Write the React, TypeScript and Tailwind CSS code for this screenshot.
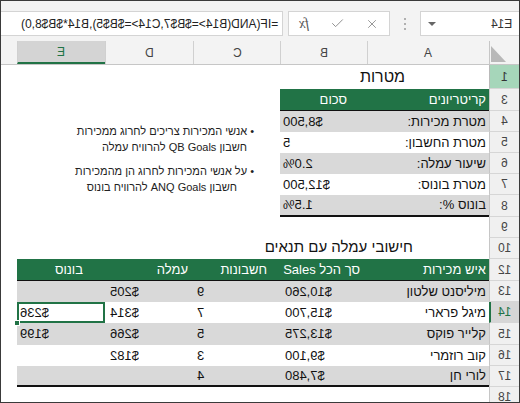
import React from 'react';
import { X, Check } from 'lucide-react';

type Kids = { children?: React.ReactNode; className?: string };

// the sheet is shown mirrored (RTL Excel), so latin digits/letters are flipped
const Mir = ({ children, className = '' }: Kids) => (
  <span dir="ltr" className={`inline-block [transform:scaleX(-1)] ${className}`}>{children}</span>
);

const Heb = ({ children, className = '' }: Kids) => (
  <span dir="rtl" className={className}>{children}</span>
);

const Cell = ({ w, className = '', children }: Kids & { w: string }) => (
  <div className={`${w} shrink-0 h-full flex items-center whitespace-nowrap ${className}`}>{children}</div>
);

const RowHead = ({ n, kind }: { n: number; kind?: 'sel' | 'hl' }) => (
  <div
    className={`w-[30px] shrink-0 h-full flex items-center justify-center text-[12px] border-b border-b-[#d6d6d6] ${
      kind === 'sel'
        ? 'bg-[#d6d6d6] text-[#217346] border-l-2 border-l-[#217346]'
        : kind === 'hl'
        ? 'bg-[#a6d6ba] text-[#333] border-l border-l-[#b9b9b9]'
        : 'bg-[#f0f0f0] text-[#444] border-l border-l-[#c6c6c6]'
    }`}
  >
    <Mir>{n}</Mir>
  </div>
);

const ColHead = ({ w, label, sel }: { w: string; label: string; sel?: boolean }) => (
  <div
    className={`${w} shrink-0 h-full flex items-center justify-center text-[12px] border-l border-[#d0d0d0] ${
      sel ? 'bg-[#d4d4d4] text-[#217346] border-b-2 border-b-[#217346]' : 'text-[#444]'
    }`}
  >
    <Mir>{label}</Mir>
  </div>
);

const Blank = () => (
  <>
    <Cell w="w-[16px]" />
    <Cell w="w-[88px]" />
    <Cell w="w-[88px]" />
    <Cell w="w-[87px]" />
  </>
);

const goals = [
  { label: 'מטרת מכירות:', value: '$8,500', h: 'h-[21px]' },
  { label: 'מטרת החשבון:', value: '5', h: 'h-[21px]' },
  { label: 'שיעור עמלה:', value: '2.0%', h: 'h-[21px]' },
  { label: 'מטרת בונוס:', value: '$12,500', h: 'h-[21px]' },
  { label: 'בונוס %:', value: '1.5%', h: 'h-[22px]' },
];

const reps = [
  { name: 'מיליסנט שלטון', sales: '$10,260', acc: '9', comm: '$205', bonus: '', h: 'h-[21px]' },
  { name: 'מיגל פרארי', sales: '$15,700', acc: '7', comm: '$314', bonus: '$236', h: 'h-[21px]' },
  { name: 'קלייר פוקס', sales: '$13,275', acc: '5', comm: '$266', bonus: '$199', h: 'h-[22px]' },
  { name: 'קוב רוזמרי', sales: '$9,100', acc: '3', comm: '$182', bonus: '', h: 'h-[21px]' },
  { name: 'לורי חן', sales: '$7,480', acc: '4', comm: '', bonus: '', h: 'h-[21px]' },
];

export default function App() {
  return (
    <div className="w-[520px] h-[403px] overflow-hidden relative border border-[#3a3a3a] bg-white text-[13px] text-[#111] font-['Liberation_Sans','DejaVu_Sans',sans-serif]">
      {/* formula bar */}
      <div className="h-[40px] bg-[#f3f3f3] flex items-start pt-[10px]">
        <div className="w-[282px] h-[25px] bg-white border border-l-0 border-[#d4d4d4] flex items-center justify-end pr-[4px] overflow-hidden">
          <Mir className="text-[12px] text-[#222]">=IF(AND(B14&gt;=$B$7,C14&gt;=$B$5),B14*$B$8,0)</Mir>
        </div>
        <div className="w-[102px] ml-[5px] h-[25px] bg-white border border-[#d4d4d4] flex items-center justify-around text-[#8a8a8a]">
          <Mir className="font-['Liberation_Serif',serif] italic text-[14px] text-[#555]">fx</Mir>
          <Check className="w-[15px] h-[15px]" strokeWidth={1.5} />
          <X className="w-[14px] h-[14px]" strokeWidth={1.5} />
        </div>
        <div className="w-[30px] h-[25px] flex flex-col items-center justify-center gap-[3px]">
          <div className="w-[2px] h-[2px] bg-[#b0b0b0]" />
          <div className="w-[2px] h-[2px] bg-[#b0b0b0]" />
          <div className="w-[2px] h-[2px] bg-[#b0b0b0]" />
        </div>
        <div className="flex-1 h-[25px] bg-white border border-r-0 border-[#d4d4d4] flex items-center justify-between pl-[7px] pr-[7px]">
          <div className="w-0 h-0 border-l-[4px] border-r-[4px] border-t-[4px] border-l-transparent border-r-transparent border-t-[#666]" />
          <Mir className="text-[12px] text-[#333]">E14</Mir>
        </div>
      </div>

      {/* column headers */}
      <div className="flex h-[24px] bg-[#f3f3f3] border-b border-[#c6c6c6]">
        <div className="w-[16px] shrink-0" />
        <ColHead w="w-[88px]" label="E" sel />
        <ColHead w="w-[88px]" label="D" />
        <ColHead w="w-[87px]" label="C" />
        <ColHead w="w-[87px]" label="B" />
        <ColHead w="w-[122px]" label="A" />
        <div className="w-[30px] shrink-0 h-full border-l border-[#c6c6c6] flex items-end pl-[1px] pb-[2px]">
          <svg width="15" height="16" viewBox="0 0 15 16">
            <polygon points="0,0 0,16 15,16" fill="#b8b8b8" />
          </svg>
        </div>
      </div>

      {/* row 1 */}
      <div className="flex h-[24px]">
        <Blank />
        <Cell w="w-[209px]" className="justify-center pr-[4px]">
          <Heb className="text-[16px]">מטרות</Heb>
        </Cell>
        <RowHead n={1} kind="hl" />
      </div>

      {/* row 3 */}
      <div className="flex h-[22px]">
        <Blank />
        <Cell w="w-[87px]" className="justify-end pr-[20px] bg-[#217346] text-white border-b border-[#111]">
          <Heb>סכום</Heb>
        </Cell>
        <Cell w="w-[122px]" className="justify-end pr-[3px] bg-[#217346] text-white border-b border-[#111]">
          <Heb>קריטריונים</Heb>
        </Cell>
        <RowHead n={3} />
      </div>

      {goals.map((g, i) => (
        <div key={g.label} className={`flex ${g.h}`}>
          <Blank />
          <Cell
            w="w-[87px]"
            className={`pl-[3px] ${i % 2 === 0 ? 'bg-[#d9d9d9]' : 'bg-white'} ${i === 4 ? 'border-b-2 border-[#111]' : ''}`}
          >
            <Mir>{g.value}</Mir>
          </Cell>
          <Cell
            w="w-[122px]"
            className={`justify-end pr-[3px] ${i % 2 === 0 ? 'bg-[#d9d9d9]' : 'bg-white'} ${i === 4 ? 'border-b-2 border-[#111]' : ''}`}
          >
            <Heb>{g.label}</Heb>
          </Cell>
          <RowHead n={i + 4} />
        </div>
      ))}

      {/* row 9 */}
      <div className="flex h-[21px]">
        <Blank />
        <Cell w="w-[209px]" />
        <RowHead n={9} />
      </div>

      {/* row 10 */}
      <div className="flex h-[21px]">
        <Cell w="w-[488px]" className="justify-end pr-[76px] items-end pb-[1px]">
          <Heb className="text-[15px]">חישובי עמלה עם תנאים</Heb>
        </Cell>
        <RowHead n={10} />
      </div>

      {/* row 12 header */}
      <div className="flex h-[22px]">
        <Cell w="w-[16px]" />
        <div className="flex h-full bg-[#217346] text-white border-b border-[#111]">
          <Cell w="w-[88px]" className="justify-end pr-[22px]">
            <Heb>בונוס</Heb>
          </Cell>
          <Cell w="w-[88px]" className="justify-end pr-[5px]">
            <Heb>עמלה</Heb>
          </Cell>
          <Cell w="w-[87px]" className="justify-end pr-[13px]">
            <Heb>חשבונות</Heb>
          </Cell>
          <Cell w="w-[87px]" className="justify-end pr-[7px]">
            <Heb>סך הכל Sales</Heb>
          </Cell>
          <Cell w="w-[122px]" className="justify-end pr-[3px]">
            <Heb>איש מכירות</Heb>
          </Cell>
        </div>
        <RowHead n={12} />
      </div>

      {reps.map((r, i) => {
        const band = i % 2 === 0 ? 'bg-[#d9d9d9]' : 'bg-white';
        const last = i === reps.length - 1 ? 'border-b-2 border-[#111]' : '';
        return (
          <div key={r.name} className={`flex ${r.h}`}>
            <Cell w="w-[16px]" />
            <div className={`flex h-full ${band} ${last}`}>
              <Cell w="w-[88px]" className="pl-[3px] relative">
                {r.bonus && <Mir>{r.bonus}</Mir>}
                {i === 1 && (
                  <>
                    <div className="absolute inset-0 border-2 border-[#217346]" />
                    <div className="absolute -left-[3px] -bottom-[3px] w-[6px] h-[6px] bg-[#217346] border border-white" />
                  </>
                )}
              </Cell>
              <Cell w="w-[88px]" className="pl-[5px]">
                {r.comm && <Mir>{r.comm}</Mir>}
              </Cell>
              <Cell w="w-[87px]" className="pl-[4px]">
                <Mir>{r.acc}</Mir>
              </Cell>
              <Cell w="w-[87px]" className="pl-[5px]">
                <Mir>{r.sales}</Mir>
              </Cell>
              <Cell w="w-[122px]" className="justify-end pr-[3px]">
                <Heb>{r.name}</Heb>
              </Cell>
            </div>
            <RowHead n={13 + i} kind={i === 1 ? 'sel' : undefined} />
          </div>
        );
      })}

      {/* row 18 */}
      <div className="flex h-[21px]">
        <Cell w="w-[488px]" />
        <RowHead n={18} />
      </div>

      {/* floating text box over D:E */}
      <div dir="rtl" className="absolute top-[122px] right-[265px] text-[11px] leading-[16px] text-[#222] whitespace-nowrap">
        <p>• אנשי המכירות צריכים לחרוג ממכירות</p>
        <p className="pr-[7px]">חשבון QB Goals להרוויח עמלה</p>
        <p className="mt-[8px]">• על אנשי המכירות לחרוג הן מהמכירות</p>
        <p className="pr-[17px]">חשבון ANQ Goals להרוויח בונוס</p>
      </div>
    </div>
  );
}
